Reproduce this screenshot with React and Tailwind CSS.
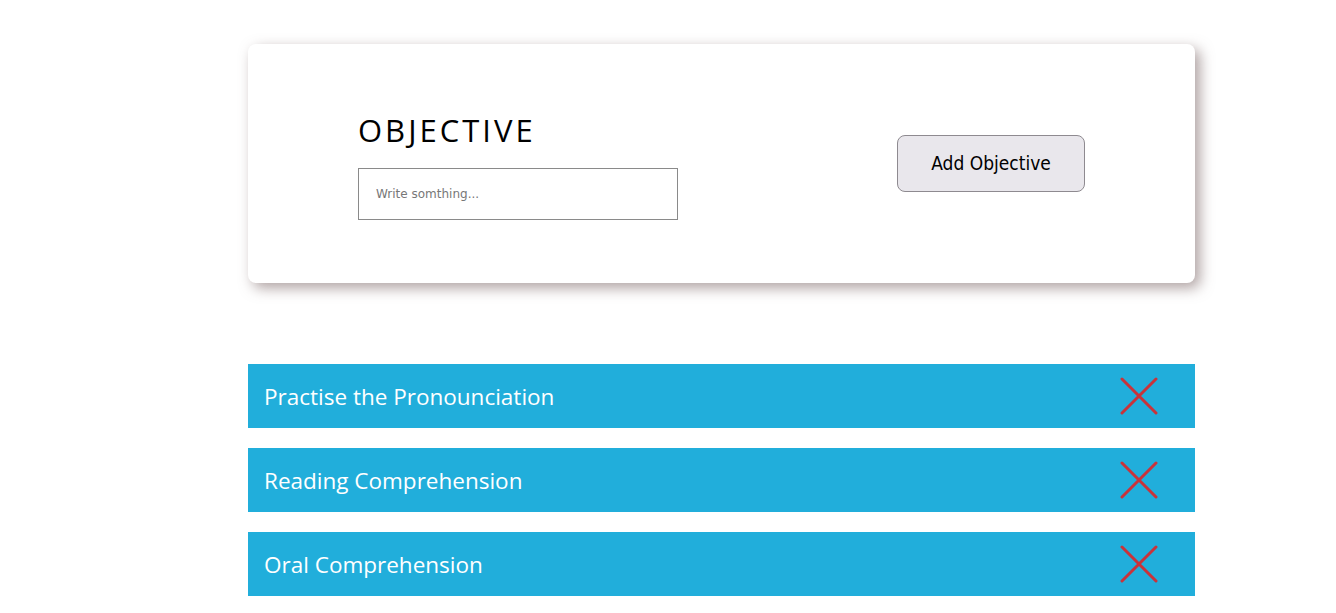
import { useState } from "react";

const initialObjectives = [
  "Practise the Pronounciation",
  "Reading Comprehension",
  "Oral Comprehension",
];

const CloseIcon = () => (
  <svg width="38" height="38" viewBox="0 0 38 38" fill="none">
    <path d="M2 2 L36 36 M36 2 L2 36" stroke="#c9333a" strokeWidth="3" strokeLinecap="round" />
  </svg>
);

const App = () => {
  const [objectives, setObjectives] = useState(initialObjectives);
  const [text, setText] = useState("");

  const addObjective = () => {
    if (!text.trim()) return;
    setObjectives([...objectives, text.trim()]);
    setText("");
  };

  return (
    <div className="min-h-screen bg-white pt-[44px] font-['Open_Sans',sans-serif]">
      <div className="ml-[248px] w-[947px]">
        {/* input card */}
        <div className="flex h-[239px] items-center justify-between rounded-lg bg-white pl-[110px] pr-[110px] shadow-[5px_5px_14px_rgba(110,85,85,0.55)]">
          <div className="flex flex-col pt-[8px]">
            <h1 className="text-[31px] leading-none tracking-[3px] text-black">OBJECTIVE</h1>
            <input
              value={text}
              onChange={(e) => setText(e.target.value)}
              placeholder="Write somthing..."
              className="mt-[22px] h-[52px] w-[320px] border border-[#8a8a8a] px-[17px] font-['DejaVu_Sans',sans-serif] text-[12px] text-black placeholder:text-[#777] outline-none"
            />
          </div>
          <button
            onClick={addObjective}
            className="h-[57px] w-[188px] rounded-lg border border-[#8e8a90] bg-[#e9e7ec] font-['DejaVu_Sans_Condensed','DejaVu_Sans',sans-serif] text-[19px] text-black"
          >
            Add Objective
          </button>
        </div>

        {/* list */}
        <div className="mt-[81px] flex flex-col gap-[20px]">
          {objectives.map((item, i) => (
            <div key={i} className="flex h-[64px] items-center justify-between bg-[#21aedb] pl-[16px] pr-[37px]">
              <span className="pt-[2px] text-[22.5px] text-white">{item}</span>
              <button onClick={() => setObjectives(objectives.filter((_, j) => j !== i))}>
                <CloseIcon />
              </button>
            </div>
          ))}
        </div>
      </div>
    </div>
  );
};

export default App;
